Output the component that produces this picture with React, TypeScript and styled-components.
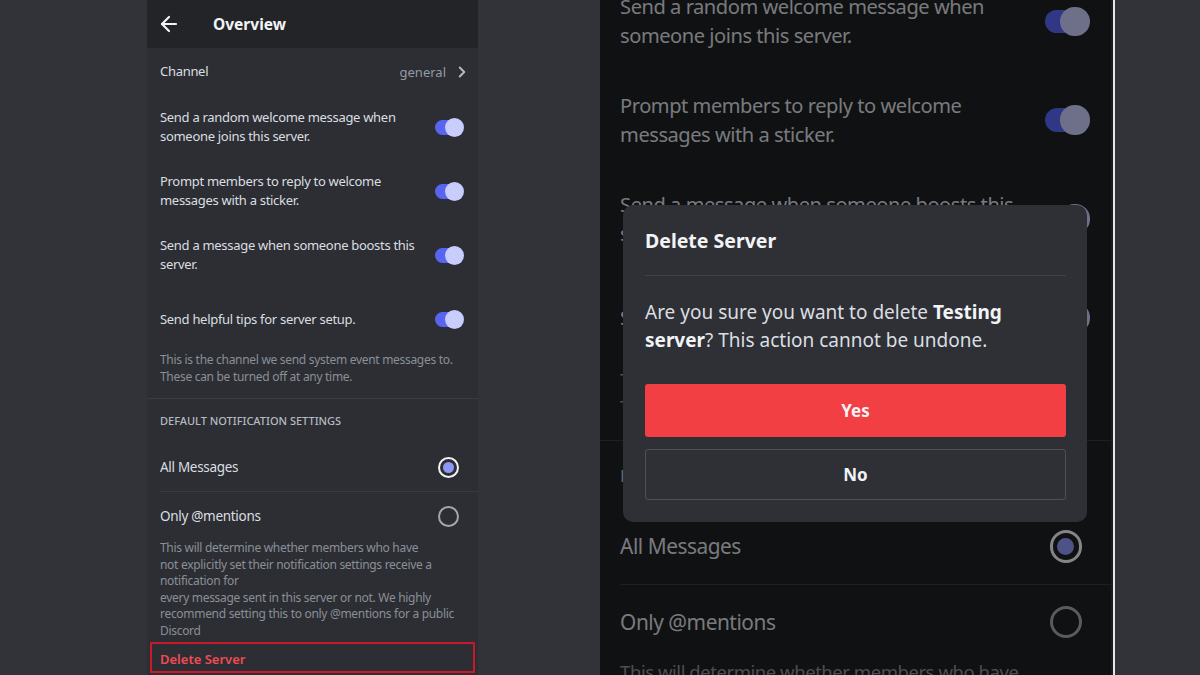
import React, { useLayoutEffect, useRef } from "react";
import styled, { createGlobalStyle } from "styled-components";
import { ArrowLeft, ChevronRight } from "lucide-react";

const GlobalStyle = createGlobalStyle`
  html, body { margin: 0; padding: 0; background: #313338; }
  body { font-family: "Noto Sans", "Open Sans", sans-serif; -webkit-font-smoothing: antialiased; }
  * { box-sizing: border-box; }
`;

const Stage = styled.div`
  display: flex;
  width: 1200px;
  height: 675px;
  overflow: hidden;
  background: #313338;
`;

const LeftPane = styled.div`
  flex-shrink: 0;
  margin-left: 147px;
  width: 331px;
  height: 675px;
  overflow: hidden;
`;

const RightPane = styled.div`
  position: relative;
  flex-shrink: 0;
  margin-left: 122px;
  width: 515px;
  height: 675px;
  border-right: 2px solid #e6e6e8;
`;

const Scroller = styled.div`
  width: 100%;
  height: 100%;
  overflow: hidden;
`;

const Zoomed = styled.div`
  zoom: 1.545;
  width: 332px;
`;

const Panel = styled.div<{ $bg: string }>`
  width: 331px;
  background: ${(p) => p.$bg};
  padding-bottom: 200px;
  letter-spacing: -0.3px;
`;

const Header = styled.div`
  display: flex;
  align-items: center;
  gap: 32px;
  height: 48px;
  padding-left: 10px;
  background: #232428;
  color: #f2f3f5;
  letter-spacing: 0;
`;

const HeaderTitle = styled.div`
  font-size: 15.5px;
  font-weight: 700;
`;

const ChannelRow = styled.div`
  display: flex;
  align-items: center;
  height: 47px;
  padding: 0 7px 0 13px;
  color: #dbdee1;
  font-size: 13.5px;
`;

const Label = styled.div`
  flex: 1;
  font-size: 13px;
  line-height: 19px;
  color: #dbdee1;
`;

const ChannelValue = styled.div`
  display: flex;
  align-items: center;
  gap: 7px;
  color: #949ba4;
  font-size: 13px;
  letter-spacing: 0;
  svg { color: #b5bac1; }
`;

const ToggleRow = styled.div`
  display: flex;
  align-items: center;
  min-height: 64px;
  padding: 0 15px 0 13px;
  gap: 16px;
`;

const Track = styled.div<{ $on: boolean }>`
  position: relative;
  flex-shrink: 0;
  width: 28px;
  height: 15px;
  border-radius: 8px;
  background: ${(p) => (p.$on ? "#5865f2" : "#4e5058")};
`;

const Knob = styled.div`
  position: absolute;
  right: -1px;
  top: -2px;
  width: 19px;
  height: 19px;
  border-radius: 50%;
  background: #c9cdfb;
`;

const Help = styled.div`
  padding: 0 13px 13px;
  font-size: 12px;
  line-height: 17px;
  color: #8a8f98;
`;

const Divider = styled.div<{ $inset?: number }>`
  height: 1px;
  margin-left: ${(p) => p.$inset ?? 0}px;
  background: #393b41;
`;

const SectionTitle = styled.div`
  padding: 15px 13px 15px;
  font-size: 11px;
  line-height: 14px;
  font-weight: 500;
  letter-spacing: 0;
  text-transform: uppercase;
  color: #b5bac1;
`;

const RadioRow = styled.div`
  display: flex;
  align-items: center;
  height: 48px;
  padding: 0 19px 0 13px;
  font-size: 13.5px;
  color: #dbdee1;
`;

const RadioLabel = styled.div`
  flex: 1;
`;

const Radio = styled.div<{ $checked: boolean }>`
  display: flex;
  align-items: center;
  justify-content: center;
  width: 21px;
  height: 21px;
  border-radius: 50%;
  border: 2px solid ${(p) => (p.$checked ? "#f2f3f5" : "#a3a6ad")};
  &::after {
    content: "";
    display: ${(p) => (p.$checked ? "block" : "none")};
    width: 11px;
    height: 11px;
    border-radius: 50%;
    background: #8f97f6;
  }
`;

const Description = styled.div`
  padding: 0 13px;
  font-size: 12px;
  line-height: 16.6px;
  color: #8a8f98;
  white-space: pre-line;
`;

const DeleteRow = styled.div<{ $highlight: boolean }>`
  display: flex;
  align-items: center;
  height: 31px;
  margin: 2px 3px 0;
  padding: 3px 0 0 8px;
  border: 2px solid ${(p) => (p.$highlight ? "#c8192b" : "transparent")};
  color: #ee4b53;
  font-size: 13px;
  font-weight: 600;
  letter-spacing: 0;
`;

const Overlay = styled.div`
  position: absolute;
  inset: 0;
  display: flex;
  justify-content: center;
  align-items: flex-start;
  padding-top: 205px;
  padding-right: 3px;
  background: rgba(0, 0, 0, 0.45);
`;

const Dialog = styled.div`
  width: 464px;
  padding: 24px 21px 22px 22px;
  border-radius: 10px;
  background: #2e3035;
  color: #dbdee1;
`;

const DialogTitle = styled.div`
  font-size: 19.5px;
  line-height: 24px;
  font-weight: 700;
  color: #f2f3f5;
`;

const DialogDivider = styled.div`
  height: 1px;
  margin: 22px 0 22px;
  background: #3f4147;
`;

const DialogBody = styled.div`
  font-size: 19px;
  line-height: 28px;
  color: #dbdee1;
  b { color: #f2f3f5; font-weight: 700; }
`;

const Actions = styled.div`
  display: flex;
  flex-direction: column;
  gap: 12px;
  margin-top: 30px;
`;

const Button = styled.div<{ $danger?: boolean }>`
  display: flex;
  align-items: center;
  justify-content: center;
  height: ${(p) => (p.$danger ? 53 : 51)}px;
  border-radius: 3px;
  font-size: 17px;
  font-weight: 700;
  color: #f2f3f5;
  background: ${(p) => (p.$danger ? "#f23f43" : "transparent")};
  border: ${(p) => (p.$danger ? "none" : "1px solid #4e5058")};
`;

const toggles = [
  "Send a random welcome message when someone joins this server.",
  "Prompt members to reply to welcome messages with a sticker.",
  "Send a message when someone boosts this server.",
  "Send helpful tips for server setup.",
];

const description =
  "This will determine whether members who have\nnot explicitly set their notification settings receive a\nnotification for\nevery message sent in this server or not. We highly\nrecommend setting this to only @mentions for a public\nDiscord";

function Overview({ bg, highlight }: { bg: string; highlight: boolean }) {
  return (
    <Panel $bg={bg}>
      <Header>
        <ArrowLeft size={24} strokeWidth={2.2} />
        <HeaderTitle>Overview</HeaderTitle>
      </Header>
      <ChannelRow>
        <Label>Channel</Label>
        <ChannelValue>
          general
          <ChevronRight size={18} strokeWidth={2.6} />
        </ChannelValue>
      </ChannelRow>
      {toggles.map((t) => (
        <ToggleRow key={t}>
          <Label>{t}</Label>
          <Track $on>
            <Knob />
          </Track>
        </ToggleRow>
      ))}
      <Help>
        This is the channel we send system event messages to.
        <br />
        These can be turned off at any time.
      </Help>
      <Divider />
      <SectionTitle>Default Notification Settings</SectionTitle>
      <RadioRow>
        <RadioLabel>All Messages</RadioLabel>
        <Radio $checked />
      </RadioRow>
      <Divider $inset={13} />
      <RadioRow>
        <RadioLabel>Only @mentions</RadioLabel>
        <Radio $checked={false} />
      </RadioRow>
      <Description>{description}</Description>
      <DeleteRow $highlight={highlight}>Delete Server</DeleteRow>
    </Panel>
  );
}

export default function App() {
  const scrollRef = useRef<HTMLDivElement>(null);
  useLayoutEffect(() => {
    if (scrollRef.current) scrollRef.current.scrollTop = 175;
  }, []);
  return (
    <>
      <GlobalStyle />
      <Stage>
        <LeftPane>
          <Overview bg="#2c2e33" highlight />
        </LeftPane>
        <RightPane>
          <Scroller ref={scrollRef}>
            <Zoomed>
              <Overview bg="#1e1f22" highlight={false} />
            </Zoomed>
          </Scroller>
          <Overlay>
            <Dialog>
              <DialogTitle>Delete Server</DialogTitle>
              <DialogDivider />
              <DialogBody>
                Are you sure you want to delete <b>Testing server</b>? This action cannot be undone.
              </DialogBody>
              <Actions>
                <Button $danger>Yes</Button>
                <Button>No</Button>
              </Actions>
            </Dialog>
          </Overlay>
        </RightPane>
      </Stage>
    </>
  );
}
